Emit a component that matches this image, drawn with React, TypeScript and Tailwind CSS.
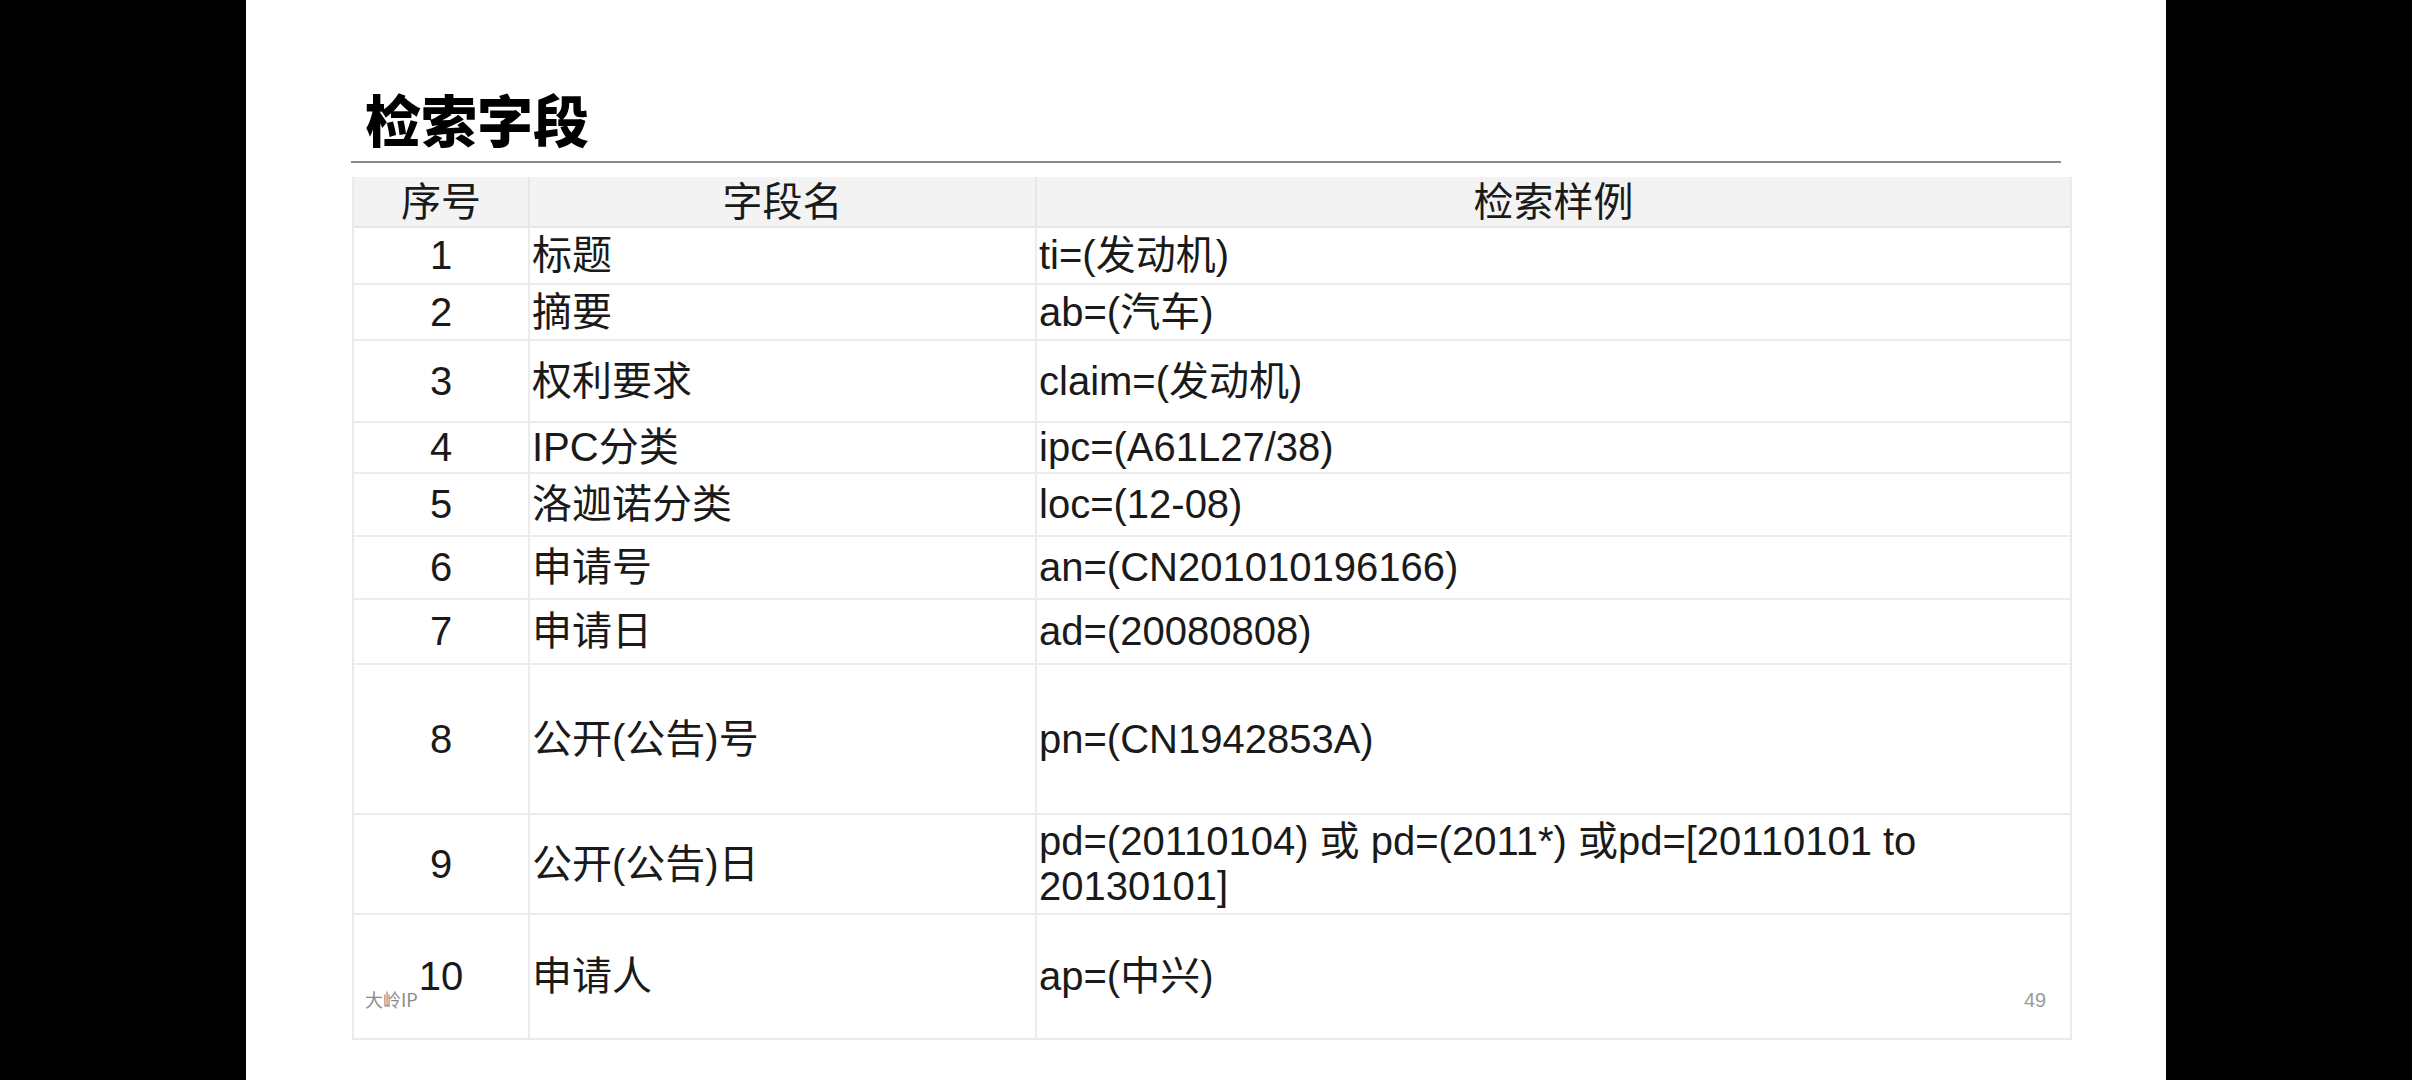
const rows = [
  { no: "1", name: "标题", example: "ti=(发动机)", h: "h-[57px]" },
  { no: "2", name: "摘要", example: "ab=(汽车)", h: "h-[56px]" },
  { no: "3", name: "权利要求", example: "claim=(发动机)", h: "h-[82px]" },
  { no: "4", name: "IPC分类", example: "ipc=(A61L27/38)", h: "h-[51px]" },
  { no: "5", name: "洛迦诺分类", example: "loc=(12-08)", h: "h-[63px]" },
  { no: "6", name: "申请号", example: "an=(CN201010196166)", h: "h-[63px]" },
  { no: "7", name: "申请日", example: "ad=(20080808)", h: "h-[65px]" },
  { no: "8", name: "公开(公告)号", example: "pn=(CN1942853A)", h: "h-[150px]" },
  {
    no: "9",
    name: "公开(公告)日",
    example: "pd=(20110104) 或 pd=(2011*) 或pd=[20110101 to\n20130101]",
    h: "h-[100px]",
  },
  { no: "10", name: "申请人", example: "ap=(中兴)", h: "h-[123px]" },
];

export default function App() {
  return (
    <div className="w-full h-[1080px] bg-black flex justify-center">
      <div
        className="relative w-[1920px] h-[1080px] bg-white text-[#1a1a1a]"
        style={{ fontFamily: '"Liberation Sans", "Noto Sans CJK SC", sans-serif' }}
      >
        {/* Title */}
        <h1
          className="ml-[119px] pt-[90px] h-[146px] text-[56px] leading-[56px] font-black text-black"
          style={{ fontFamily: '"Noto Sans CJK SC", sans-serif' }}
        >
          检索字段
        </h1>

        <div className="ml-[105px] mt-[15px] w-[1710px] h-[2px] bg-[#8c8c8c]" />

        {/* Table */}
        <div className="ml-[106px] mt-[14px] w-[1720px] border-l-2 border-r-2 border-b-2 border-[#ebebeb]">
          <div className="grid grid-cols-[176px_507px_1fr] h-[51px] bg-[#f3f3f3] border-b-2 border-[#e6e6e6] text-[40px] leading-none">
            <div className="flex items-center justify-center border-r-2 border-[#e6e6e6]">序号</div>
            <div className="flex items-center justify-center border-r-2 border-[#e6e6e6]">字段名</div>
            <div className="flex items-center justify-center">检索样例</div>
          </div>

          {rows.map((r, i) => (
            <div
              key={r.no}
              className={`grid grid-cols-[176px_507px_1fr] ${r.h} ${
                i < rows.length - 1 ? "border-b-2 border-[#ececec]" : ""
              } text-[40px] leading-[45px]`}
            >
              <div className="flex items-center justify-center border-r-2 border-[#ececec]">{r.no}</div>
              <div className="flex items-center pl-[2px] border-r-2 border-[#ececec]">{r.name}</div>
              <div className="flex items-center pl-[2px] whitespace-pre-line">{r.example}</div>
            </div>
          ))}
        </div>

        {/* Watermark + page number */}
        <span
          className="absolute left-[119px] top-[990px] text-[18px] leading-none text-[#8a8a8a]"
          style={{ fontFamily: '"Noto Sans CJK SC", sans-serif' }}
        >
          大岭IP
        </span>
        <span className="absolute left-[1778px] top-[990px] text-[20px] leading-none text-[#9a9a9a]">
          49
        </span>
      </div>
    </div>
  );
}
